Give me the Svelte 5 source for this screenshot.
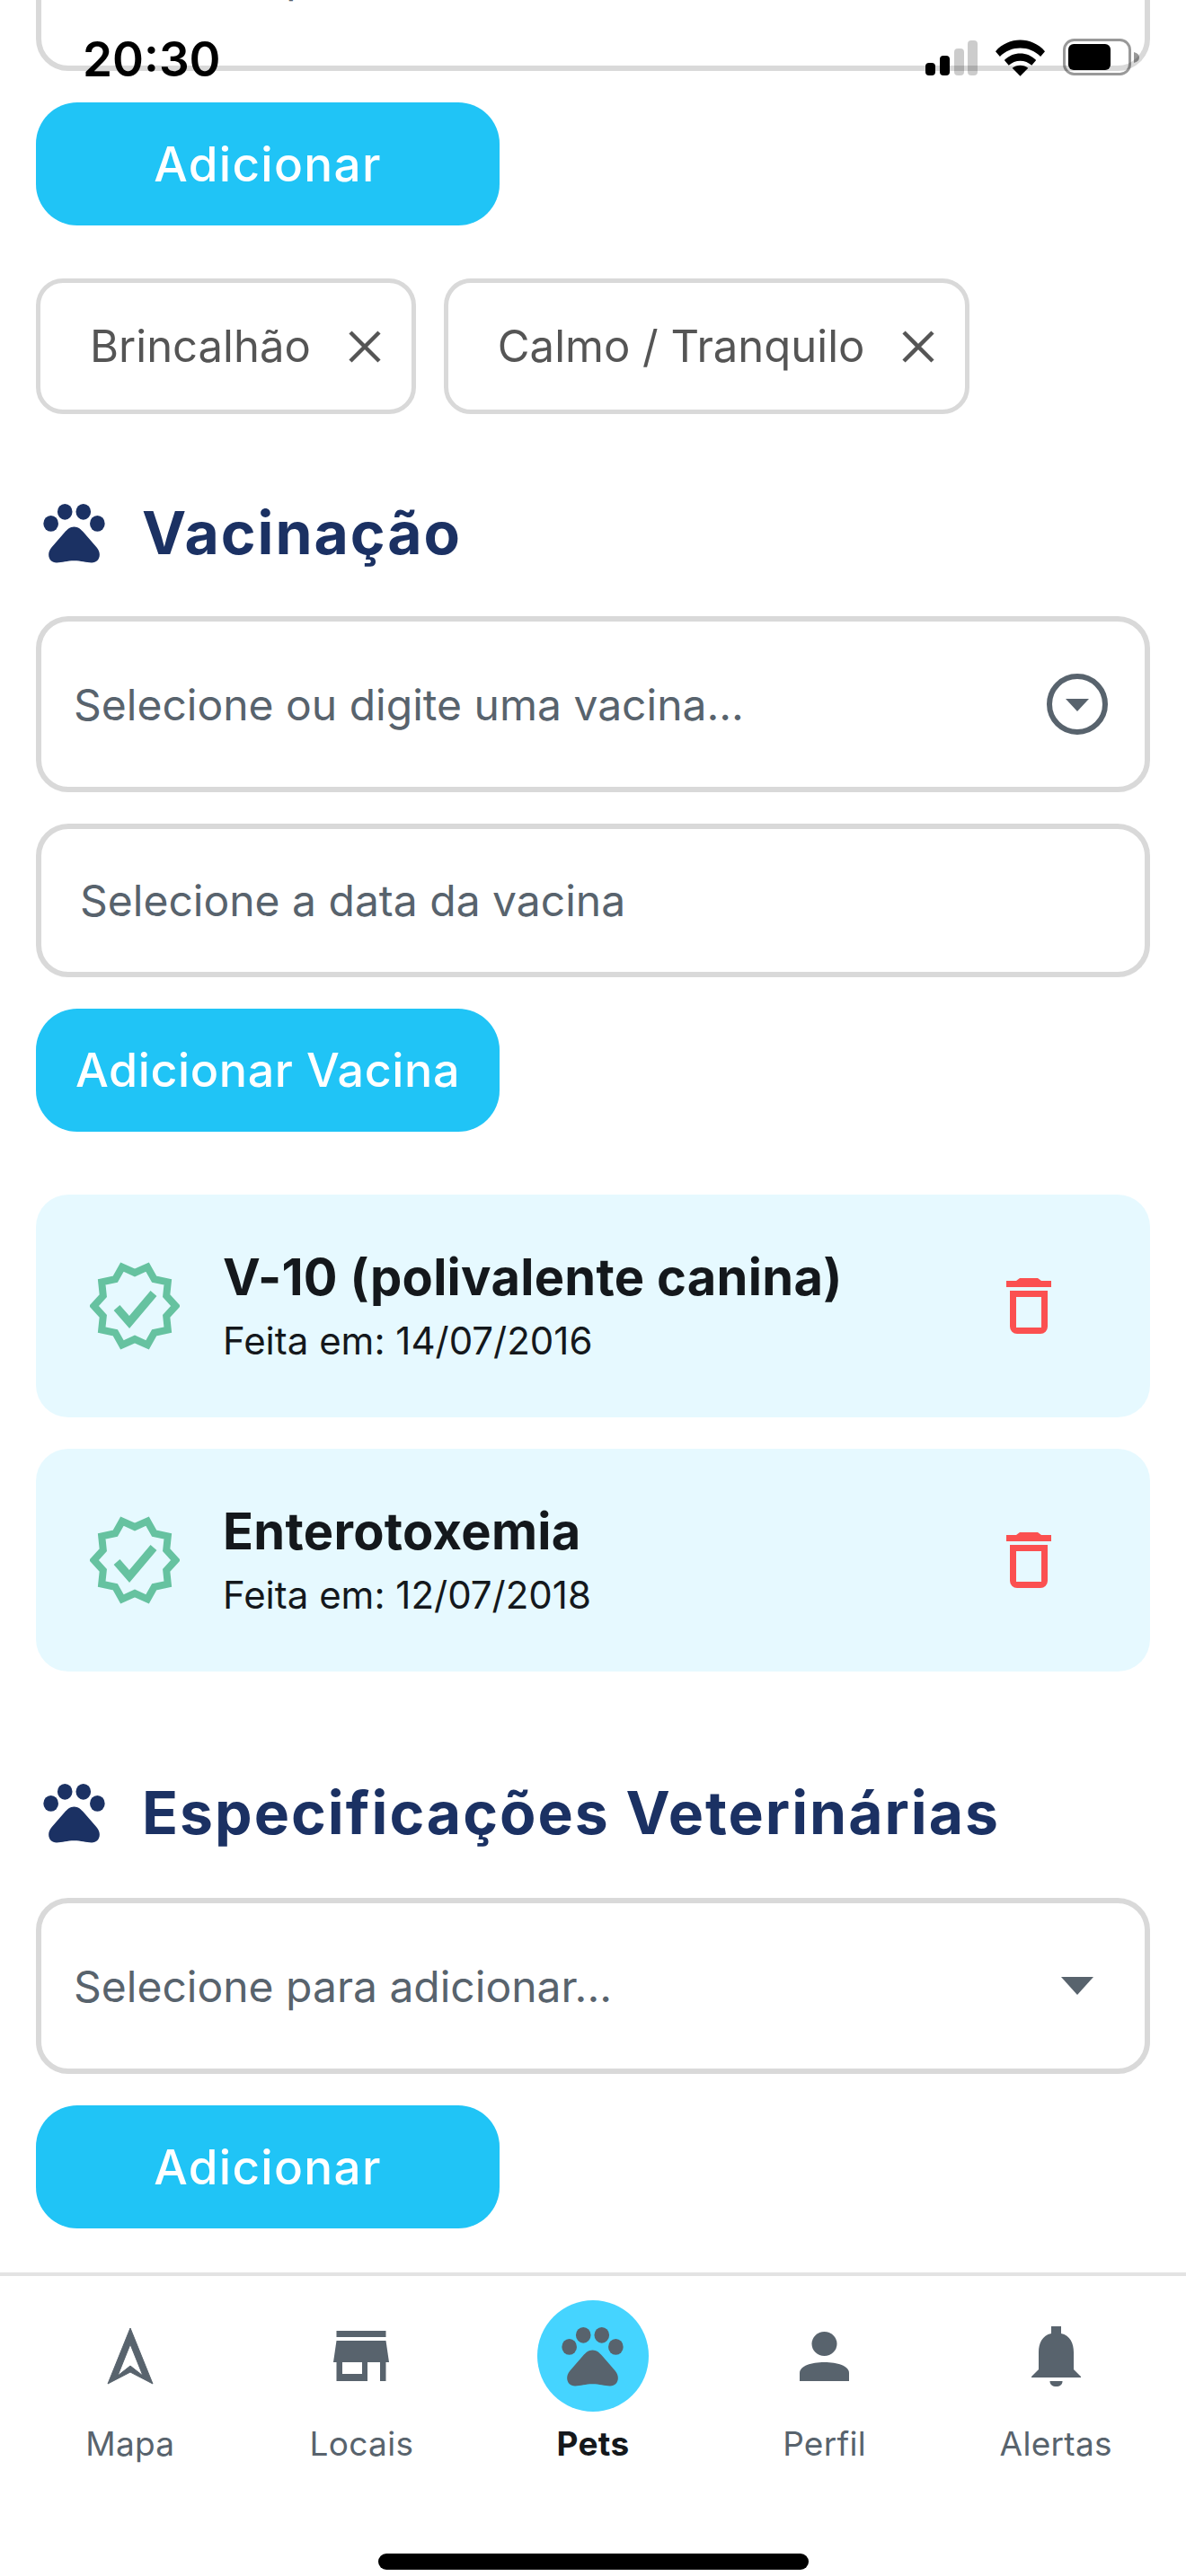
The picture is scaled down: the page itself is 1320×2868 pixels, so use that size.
<script>
  const tabs = [
    { label: 'Mapa', icon: 'nav' },
    { label: 'Locais', icon: 'store' },
    { label: 'Pets', icon: 'paw', active: true },
    { label: 'Perfil', icon: 'person' },
    { label: 'Alertas', icon: 'bell' }
  ];
  const vaccines = [
    { name: 'V-10 (polivalente canina)', date: '14/07/2016' },
    { name: 'Enterotoxemia', date: '12/07/2018' }
  ];
  const tags = ['Brincalhão', 'Calmo / Tranquilo'];

  // ten pointed seal behind the check mark
  const seal = Array.from({ length: 20 }, (_, i) => {
    const r = i % 2 ? 37 : 45.5;
    const a = (i * Math.PI) / 10;
    return `${(50 + r * Math.cos(a)).toFixed(1)},${(50 + r * Math.sin(a)).toFixed(1)}`;
  }).join(' ');
</script>

{#snippet paw()}
  <svg class="paw" viewBox="0 0 24 24">
    <ellipse cx="4.700" cy="9" rx="2.350" ry="2.500" />
    <ellipse cx="9.100" cy="5.300" rx="2.350" ry="2.500" />
    <ellipse cx="14.900" cy="5.300" rx="2.350" ry="2.500" />
    <ellipse cx="19.300" cy="9" rx="2.350" ry="2.500" />
    <path d="M12 10c-1.200 0-2.200.8-3 1.800L4.900 16.500c-.6.8-.9 1.500-.9 2.300 0 1.500 1 2.500 2.500 2.500 1.800 0 3.300-.6 5.500-.6s3.700.6 5.500.6c1.500 0 2.500-1 2.500-2.500 0-.8-.3-1.500-.9-2.300L15 11.800c-.8-1-1.800-1.800-3-1.800z" />
  </svg>
{/snippet}

<div class="screen">
  <div class="status">
    <span class="time">20:30</span>
    <div class="status-icons">
      <svg width="58" height="40" viewBox="0 0 58 40">
        <rect x="0" y="25" width="11" height="14" rx="4" fill="#000" />
        <rect x="16" y="17" width="11" height="22" rx="4" fill="#000" />
        <rect x="32" y="9" width="11" height="30" rx="4" fill="#000" opacity="0.2" />
        <rect x="47" y="0" width="11" height="39" rx="4" fill="#000" opacity="0.2" />
      </svg>
      <svg width="55" height="42" viewBox="0 0 56 42">
        <path d="M0 14C15 -3 41 -3 56 14l-5 6C39 7 17 7 5 20z" fill="#000" />
        <path d="M10 24c10-10 26-10 36 0l-5 6c-7-7-19-7-26 0z" fill="#000" />
        <path d="M19 33c5-4 13-4 18 0l-9 9z" fill="#000" />
      </svg>
      <svg width="86" height="42" viewBox="0 0 86 42">
        <rect x="1.500" y="1.500" width="73" height="38" rx="11" fill="none" stroke="#000" stroke-opacity="0.4" stroke-width="3" />
        <rect x="6" y="6" width="47" height="29" rx="6" fill="#000" />
        <path d="M79 15c4 1 6 3 6 6s-2 5-6 6z" fill="#000" fill-opacity="0.4" />
      </svg>
    </div>
  </div>

  <main class="content">
    <div class="field clipped"><span class="placeholder">Selecione para adicionar...</span></div>
    <button class="btn">Adicionar</button>

    <div class="tags">
      {#each tags as tag}
        <div class="tag">
          <span>{tag}</span>
          <svg width="40" height="40" viewBox="0 0 40 40"><path d="M4 4l32 32M36 4L4 36" stroke="#555" stroke-width="4.500" fill="none" /></svg>
        </div>
      {/each}
    </div>

    <h2 class="heading">{@render paw()}<span>Vacinação</span></h2>

    <div class="field select">
      <span class="placeholder">Selecione ou digite uma vacina...</span>
      <svg width="70" height="70" viewBox="0 0 70 70">
        <circle cx="35" cy="35" r="31" fill="none" stroke="#58636d" stroke-width="6" />
        <path d="M22 29h26L35 43z" fill="#58636d" />
      </svg>
    </div>
    <div class="field date"><span class="placeholder">Selecione a data da vacina</span></div>
    <button class="btn wide">Adicionar Vacina</button>

    <div class="cards">
      {#each vaccines as v}
        <div class="card">
          <svg class="badge" width="100" height="100" viewBox="0 0 100 100">
            <polygon points={seal} fill="none" stroke="#66c2a0" stroke-width="8" />
            <path d="M30 52l14 16 27-32" fill="none" stroke="#66c2a0" stroke-width="9" />
          </svg>
          <div class="card-text">
            <strong>{v.name}</strong>
            <span>Feita em: {v.date}</span>
          </div>
          <svg class="trash" width="50" height="62" viewBox="0 0 50 62">
            <path d="M0 3h11l4-3h20l4 3h11v7H0z" fill="#fb5050" />
            <path d="M4 14h42v40a8 8 0 0 1-8 8H12a8 8 0 0 1-8-8z M11 21v34h28V21z" fill="#fb5050" fill-rule="evenodd" />
          </svg>
        </div>
      {/each}
    </div>

    <h2 class="heading second">{@render paw()}<span>Especificações Veterinárias</span></h2>

    <div class="field select spec">
      <span class="placeholder">Selecione para adicionar...</span>
      <svg class="caret" width="36" height="20" viewBox="0 0 36 20"><path d="M0 0h36L18 20z" fill="#58636d" /></svg>
    </div>
    <button class="btn">Adicionar</button>
  </main>

  <nav class="tabbar">
    {#each tabs as t}
      <div class="tab" class:active={t.active}>
        <div class="tab-icon">
          {#if t.icon === 'nav'}
            <svg width="52" height="64" viewBox="0 0 52 64">
              <path d="M26 1L51 63 26 50 1 63z M26 19L40 54 26 43 12 54z" fill="#58636d" stroke="#58636d" stroke-width="1" stroke-linejoin="round" fill-rule="evenodd" />
            </svg>
          {:else if t.icon === 'store'}
            <svg width="62" height="56" viewBox="0 0 62 56">
              <path d="M3.500 0h55v7h-55z" fill="#58636d" />
              <path d="M3.500 11h55L62 35H0z" fill="#58636d" />
              <path d="M3.500 35H38v21H3.500z M10 35v13h22V35z" fill="#58636d" fill-rule="evenodd" />
              <path d="M52 35h6.500v21H52z" fill="#58636d" />
            </svg>
          {:else if t.icon === 'paw'}
            <div class="paw-circle">{@render paw()}</div>
          {:else if t.icon === 'person'}
            <svg width="55" height="55" viewBox="0 0 55 55">
              <ellipse cx="27.500" cy="13.500" rx="14" ry="13.500" fill="#58636d" />
              <path d="M0 55V46c0-8 13-12 27.500-12S55 38 55 46v9z" fill="#58636d" />
            </svg>
          {:else}
            <svg width="55" height="67" viewBox="0 0 55 67">
              <path d="M22 0h11v8c10 2 14 11 14 21v19l8 8v1H0v-1l8-8V29C8 19 12 10 22 8z" fill="#58636d" />
              <path d="M20.500 61h14c0 4-3 6-7 6s-7-2-7-6z" fill="#58636d" />
            </svg>
          {/if}
        </div>
        <span>{t.label}</span>
      </div>
    {/each}
  </nav>
  <div class="home"></div>
</div>

<style>
  :global(body) {
    margin: 0;
    background: #fff;
  }

  .screen {
    position: relative;
    width: 1320px;
    height: 2868px;
    overflow: hidden;
    background: #fff;
    display: flex;
    flex-direction: column;
    font-family: Inter, "Noto Sans", sans-serif;
  }

  .status {
    position: absolute;
    top: 0;
    left: 0;
    right: 0;
    height: 90px;
    display: flex;
    justify-content: space-between;
    align-items: flex-end;
    padding: 0 51px 5px 92px;
    box-sizing: border-box;
  }
  .time {
    font-size: 53px;
    line-height: 48px;
    font-weight: 600;
    color: #000;
    margin-bottom: -5px;
  }
  .status-icons {
    display: flex;
    align-items: flex-end;
    gap: 20px;
  }

  .content {
    flex: 1;
    padding: 0 40px;
  }

  .field {
    box-sizing: border-box;
    width: 100%;
    border: 6px solid #d9d9d9;
    border-radius: 36px;
    display: flex;
    align-items: center;
    justify-content: space-between;
    background: #fff;
  }
  .clipped {
    height: 192px;
    margin-top: -113px;
    padding: 0 0 18px 36px;
  }
  .select {
    height: 196px;
    padding: 0 40px 0 36px;
  }
  .date {
    height: 171px;
    margin-top: 35px;
    padding-left: 43px;
  }
  .placeholder {
    font-size: 48px;
    color: #58636d;
  }
  .caret {
    margin-right: 17px;
  }

  .btn {
    display: block;
    width: 516px;
    height: 137px;
    margin-top: 35px;
    padding: 0;
    border: none;
    border-radius: 46px;
    background: #20c4f6;
    color: #fff;
    font-family: inherit;
    font-size: 53px;
    font-weight: 500;
    letter-spacing: 1.300px;
  }
  .btn.wide {
    font-size: 52px;
    letter-spacing: 0.600px;
  }

  .tags {
    display: flex;
    gap: 31px;
    margin-top: 59px;
  }
  .tag {
    box-sizing: border-box;
    height: 151px;
    display: flex;
    align-items: center;
    gap: 40px;
    padding: 0 32px 0 55px;
    border: 5px solid #d9d9d9;
    border-radius: 30px;
    font-size: 49px;
    color: #555;
  }

  .heading {
    display: flex;
    align-items: center;
    gap: 33px;
    margin: 92px 0 0;
    height: 80px;
    font-size: 66px;
    font-weight: 700;
    letter-spacing: 2px;
    color: #1b3163;
  }
  .heading + .field {
    margin-top: 53px;
  }
  .heading + .spec {
    margin-top: 55px;
  }
  .second {
    margin-top: 117px;
  }
  .paw {
    width: 85px;
    height: 85px;
    fill: #1b3163;
  }

  .cards {
    display: flex;
    flex-direction: column;
    gap: 35px;
    margin-top: 70px;
  }
  .card {
    height: 248px;
    display: flex;
    align-items: center;
    padding: 0 110px 0 60px;
    border-radius: 36px;
    background: #e6f9ff;
  }
  .badge {
    flex: none;
    margin-right: 48px;
  }
  .card-text {
    flex: 1;
    display: flex;
    flex-direction: column;
    gap: 11px;
    color: #14181c;
  }
  .card-text strong {
    font-size: 56px;
    font-weight: 700;
    letter-spacing: 0.300px;
    margin-top: -2px;
  }
  .card-text span {
    font-size: 42px;
  }
  .trash {
    flex: none;
  }

  .tabbar {
    box-sizing: border-box;
    height: 338px;
    padding: 0 16px;
    border-top: 4px solid #e3e3e3;
    display: grid;
    grid-template-columns: repeat(5, 1fr);
  }
  .tab {
    display: flex;
    flex-direction: column;
    align-items: center;
    padding-top: 27px;
    font-size: 37px;
    letter-spacing: 0.300px;
    color: #58636d;
  }
  .tab.active {
    font-weight: 700;
    color: #14181c;
  }
  .tab-icon {
    height: 124px;
    display: flex;
    align-items: center;
    justify-content: center;
    margin-bottom: 13px;
  }
  .paw-circle {
    width: 124px;
    height: 124px;
    border-radius: 50%;
    background: #45d4ff;
    display: flex;
    align-items: center;
    justify-content: center;
  }
  .paw-circle .paw {
    fill: #58636d;
  }

  .home {
    position: absolute;
    left: 421px;
    bottom: 7px;
    width: 479px;
    height: 18px;
    border-radius: 9px;
    background: #000;
  }
</style>
